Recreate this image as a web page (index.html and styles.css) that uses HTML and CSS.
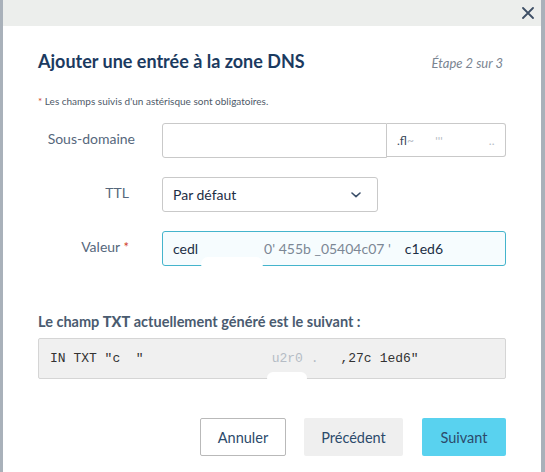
FILE: index.html
```html
<!DOCTYPE html>
<html lang="fr">
<head>
<meta charset="utf-8">
<title>Ajouter une entrée à la zone DNS</title>
<link rel="stylesheet" href="styles.css">
</head>
<body>
<div class="modal">
  <div class="modal-top">
    <button class="close" aria-label="Fermer">
      <svg width="12" height="12" viewBox="0 0 12 12"><path d="M1 1 L11 11 M11 1 L1 11" stroke="#3e4f65" stroke-width="1.8" stroke-linecap="round" fill="none"/></svg>
    </button>
  </div>
  <div class="modal-body">
    <div class="heading">
      <h1 class="title">Ajouter une entrée à la zone DNS</h1>
      <span class="step">Étape 2 sur 3</span>
    </div>
    <p class="note"><span class="req">*</span> Les champs suivis d'un astérisque sont obligatoires.</p>

    <div class="form">
      <label class="label label--wide">Sous-domaine</label>
      <div class="group">
        <div class="field field--grow"></div>
        <div class="addon">.fl<span class="faint">~ &nbsp; &nbsp; &nbsp; ''' &nbsp; &nbsp; &nbsp; &nbsp; &nbsp; &nbsp; &nbsp; .. </span></div>
      </div>

      <label class="label">TTL</label>
      <div class="select">
        <span>Par défaut</span>
        <svg width="10" height="6" viewBox="0 0 10 6"><path d="M1 1 L5 4.6 L9 1" stroke="#3b4f6a" stroke-width="1.6" fill="none" stroke-linecap="round" stroke-linejoin="round"/></svg>
      </div>

      <label class="label">Valeur <span class="req req--lg">*</span></label>
      <div class="field field--active">
        <span>cedl</span><span class="gap gap--a"></span><span class="mid">0' 455b _05404c07 '</span><span class="gap gap--b"></span><span>c1ed6</span>
        <span class="blot blot--value"></span>
      </div>
    </div>

    <h2 class="subtitle">Le champ <b>TXT</b> actuellement généré est le suivant :</h2>
    <div class="code">IN TXT "c&nbsp;&nbsp;"<span class="gap gap--c"></span><span class="faint">u2r0 .</span><span class="gap gap--d"></span>,27c<span class="gap gap--e"></span>1ed6"<span class="blot blot--code"></span></div>

    <div class="actions">
      <button class="btn btn--outline">Annuler</button>
      <button class="btn btn--grey">Précédent</button>
      <button class="btn btn--primary">Suivant</button>
    </div>
  </div>
</div>
</body>
</html>
```

FILE: styles.css
```css
* { box-sizing: border-box; }

html, body {
  margin: 0;
  padding: 0;
  height: 100%;
}

body {
  background: #a9b1ba;
  font-family: "Lato", "Open Sans", sans-serif;
  overflow: hidden;
}

.modal {
  margin: 0 4px 0 3px;
  height: 472px;
  background: #ffffff;
}

.modal-top {
  height: 26px;
  background: #eceeec;
  display: flex;
  justify-content: flex-end;
  align-items: center;
  padding-right: 6px;
}

.close {
  border: 0;
  background: transparent;
  padding: 0;
  width: 14px;
  height: 14px;
  display: flex;
  align-items: center;
  justify-content: center;
  cursor: pointer;
}

.modal-body {
  padding: 23px 35px 0 35px;
}

.heading {
  display: flex;
  justify-content: space-between;
  align-items: baseline;
}

.title {
  margin: 0;
  font-size: 18px;
  line-height: 24px;
  font-weight: 700;
  color: #1b3a60;
}

.step {
  font-size: 13px;
  font-style: italic;
  color: #7a8491;
  padding-right: 3px;
}

.note {
  margin: 21px 0 0 0;
  font-size: 10px;
  line-height: 14px;
  color: #4e5968;
}

.req {
  color: #d0422c;
}

.req--lg {
  font-size: 13px;
}

.form {
  margin-top: 15px;
  display: grid;
  grid-template-columns: 91px 1fr;
  column-gap: 33px;
  row-gap: 19px;
  align-items: center;
}

.label {
  text-align: right;
  font-size: 14px;
  color: #56677c;
  line-height: 18px;
  padding-bottom: 3px;
  white-space: nowrap;
}

.label--wide {
  margin-right: -6px;
}

.group {
  display: flex;
}

.field {
  position: relative;
  height: 35px;
  border: 1px solid #c9c9c9;
  border-radius: 3px;
  background: #fff;
  display: flex;
  align-items: center;
  padding-left: 10px;
  font-size: 14px;
  color: #1c2e45;
  white-space: nowrap;
}

.field--grow {
  width: 225px;
  border-radius: 3px 0 0 3px;
}

.addon {
  width: 119px;
  height: 34px;
  border: 1px solid #c9c9c9;
  border-left: 0;
  border-radius: 0 3px 3px 0;
  display: flex;
  align-items: center;
  padding-left: 10px;
  font-size: 12px;
  color: #3a4657;
  white-space: nowrap;
}

.faint {
  color: #b5bcc5;
}

.mid {
  color: #7c8795;
}

.select {
  width: 216px;
  height: 35px;
  border: 1px solid #c9c9c9;
  border-radius: 3px;
  display: flex;
  align-items: center;
  justify-content: space-between;
  padding: 0 16px 0 10px;
  font-size: 14px;
  color: #1c2e45;
}

.field--active {
  border-color: #44b4cc;
  background: #f6fcfe;
}

.gap {
  display: inline-block;
}
.gap--a { width: 66px; }
.gap--b { width: 14px; }
.gap--c { width: 128px; }
.gap--d { width: 22px; }
.gap--e { width: 8px; }

.blot {
  position: absolute;
  background: #ffffff;
  border-radius: 14px;
}

.blot--value {
  left: 38px;
  bottom: -6px;
  width: 62px;
  height: 14px;
}

.blot--code {
  left: 228px;
  bottom: -6px;
  width: 40px;
  height: 12px;
}

.subtitle {
  margin: 47px 0 0 0;
  font-size: 14.5px;
  line-height: 18px;
  font-weight: 700;
  color: #4a5b70;
}

.code {
  position: relative;
  margin-top: 7px;
  height: 41px;
  background: #f0f0f0;
  border: 1px solid #d5d5d5;
  border-radius: 2px;
  display: flex;
  align-items: center;
  padding-left: 11px;
  font-family: "Liberation Mono", "DejaVu Sans Mono", monospace;
  font-size: 13px;
  color: #333333;
  white-space: pre;
}

.actions {
  margin-top: 39px;
  display: flex;
  justify-content: flex-end;
  gap: 18px;
}

.btn {
  height: 38px;
  border-radius: 2px;
  font-family: "Lato", "Open Sans", sans-serif;
  font-size: 14.5px;
  color: #2c4a6b;
  border: 1px solid transparent;
  cursor: pointer;
  padding: 0;
}

.btn--outline {
  width: 86px;
  background: #fff;
  border-color: #b9b9b9;
}

.btn--grey {
  width: 99px;
  background: #efefef;
}

.btn--primary {
  width: 84px;
  background: #59d2ef;
  margin-left: 1px;
}
```
